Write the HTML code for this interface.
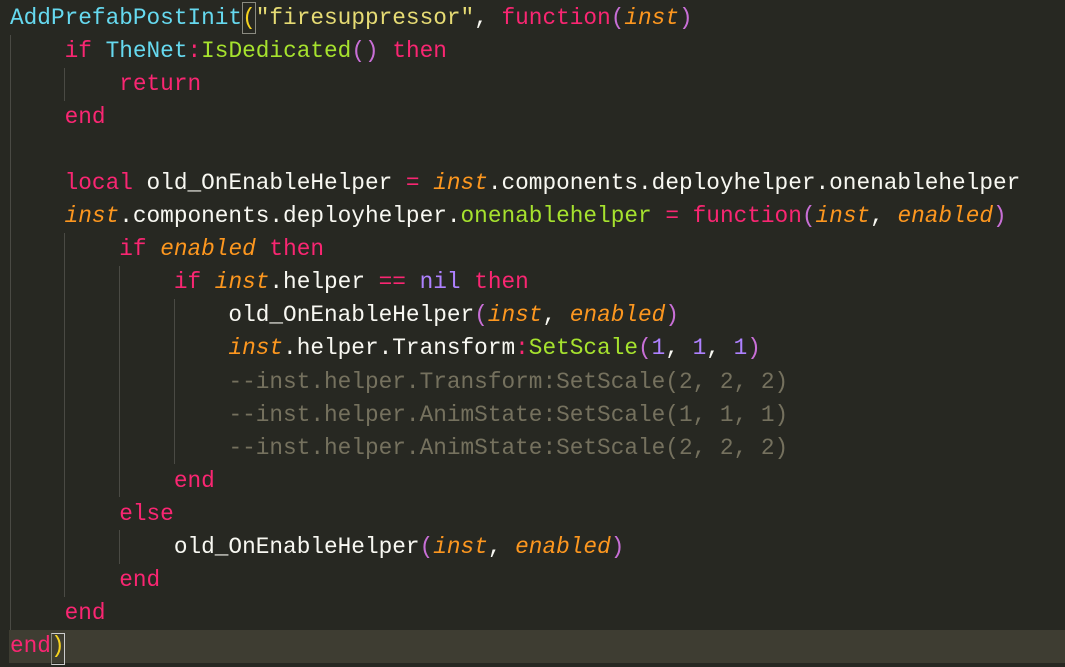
<!DOCTYPE html>
<html><head><meta charset="utf-8"><style>
body{margin:0;width:1065px;height:667px;background:#272822;overflow:hidden;position:relative}
pre{margin:0;position:absolute;left:10px;top:1.5px;font-family:"Liberation Mono","DejaVu Sans Mono",monospace;font-size:22.75px;line-height:33.1px;color:#f8f8f2}
.k{color:#f92672}.f{color:#a6e22e}.c{color:#66d9ef}.s{color:#e6db74}.p{color:#fd971f;font-style:italic}.n{color:#ae81ff}.m{color:#75715e}.b{color:#c86fd6}.y{color:#f5d21f}
.g{position:absolute;width:1px;background:#4a4a44}
.hl{position:absolute;left:9px;right:0;top:630px;height:33px;background:#3e3d32}
.box{position:absolute;border:1px solid #8a8a80}
</style></head><body>
<div class="hl"></div>
<div class="g" style="left:10px;top:35px;height:595px"></div>
<div class="g" style="left:64px;top:68px;height:33px"></div>
<div class="g" style="left:64px;top:233px;height:364px"></div>
<div class="g" style="left:119px;top:266px;height:231px"></div>
<div class="g" style="left:119px;top:530px;height:34px"></div>
<div class="g" style="left:174px;top:299px;height:165px"></div>
<div class="box" style="left:242px;top:2px;width:12px;height:30px"></div>
<div class="box" style="left:51px;top:633px;width:12px;height:30px;border-color:#ccc;border-left-color:#8a8a80"></div>
<pre><span class="c">AddPrefabPostInit</span><span class="y">(</span><span class="s">"firesuppressor"</span>, <span class="k">function</span><span class="b">(</span><span class="p">inst</span><span class="b">)</span>
    <span class="k">if</span> <span class="c">TheNet</span><span class="k">:</span><span class="f">IsDedicated</span><span class="b">()</span> <span class="k">then</span>
        <span class="k">return</span>
    <span class="k">end</span>

    <span class="k">local</span> old_OnEnableHelper <span class="k">=</span> <span class="p">inst</span>.components.deployhelper.onenablehelper
    <span class="p">inst</span>.components.deployhelper.<span class="f">onenablehelper</span> <span class="k">=</span> <span class="k">function</span><span class="b">(</span><span class="p">inst</span>, <span class="p">enabled</span><span class="b">)</span>
        <span class="k">if</span> <span class="p">enabled</span> <span class="k">then</span>
            <span class="k">if</span> <span class="p">inst</span>.helper <span class="k">==</span> <span class="n">nil</span> <span class="k">then</span>
                old_OnEnableHelper<span class="b">(</span><span class="p">inst</span>, <span class="p">enabled</span><span class="b">)</span>
                <span class="p">inst</span>.helper.Transform<span class="k">:</span><span class="f">SetScale</span><span class="b">(</span><span class="n">1</span>, <span class="n">1</span>, <span class="n">1</span><span class="b">)</span>
                <span class="m">--inst.helper.Transform:SetScale(2, 2, 2)</span>
                <span class="m">--inst.helper.AnimState:SetScale(1, 1, 1)</span>
                <span class="m">--inst.helper.AnimState:SetScale(2, 2, 2)</span>
            <span class="k">end</span>
        <span class="k">else</span>
            old_OnEnableHelper<span class="b">(</span><span class="p">inst</span>, <span class="p">enabled</span><span class="b">)</span>
        <span class="k">end</span>
    <span class="k">end</span>
<span class="k">end</span><span class="y">)</span></pre>
</body></html>
